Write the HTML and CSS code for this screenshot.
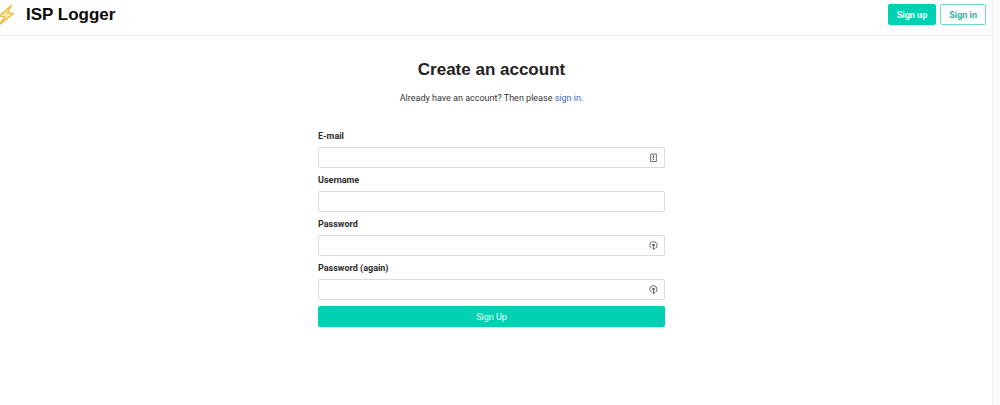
FILE: index.html
```html
<!DOCTYPE html>
<html lang="en">
<head>
  <meta charset="UTF-8">
  <meta name="viewport" content="width=device-width, initial-scale=1">
  <title>ISP Logger</title>
  <link rel="stylesheet" href="styles.css">
</head>
<body>
  <div class="page">
    <header class="navbar">
      <a class="brand" href="#">
        <svg class="bolt" viewBox="0 0 16 22" aria-hidden="true">
          <path d="M11.5 1.5L-1 12L5 12.8L-0.5 20.5L13.5 9.5L7.5 8.8Z" fill="#fde9a8" stroke="#ecb93f" stroke-width="1.3" stroke-linejoin="round"/>
        </svg>
        <span>ISP Logger</span>
      </a>
      <nav class="buttons">
        <a class="button primary" href="#">Sign up</a>
        <a class="button outlined" href="#">Sign in</a>
      </nav>
    </header>

    <main class="content">
      <h1>Create an account</h1>
      <p class="subtitle">Already have an account? Then please <a href="#">sign in</a>.</p>

      <form class="signup">
        <div class="field">
          <label for="email">E-mail</label>
          <div class="control">
            <input type="email" id="email" name="email">
            <svg class="icon" viewBox="0 0 8 8" aria-hidden="true">
              <rect x="1.4" y="0.9" width="5.2" height="6.6" rx="0.6" fill="#f4f4f4" stroke="#777" stroke-width="0.9"/>
              <path d="M4 2v2.6M4 5.4v0.8" stroke="#666"/>
            </svg>
          </div>
        </div>
        <div class="field">
          <label for="username">Username</label>
          <div class="control">
            <input type="text" id="username" name="username">
          </div>
        </div>
        <div class="field">
          <label for="password1">Password</label>
          <div class="control">
            <input type="password" id="password1" name="password1">
            <svg class="icon" viewBox="0 0 8 8" aria-hidden="true">
              <path d="M2.3 6.6A3.2 3.2 0 1 1 5.9 6.4" fill="none" stroke="#777" stroke-width="0.9"/>
              <circle cx="4" cy="3.6" r="1.1" fill="#555"/>
              <path d="M4 4v4M4 6.8h1.5" stroke="#666" stroke-width="0.9"/>
            </svg>
          </div>
        </div>
        <div class="field">
          <label for="password2">Password (again)</label>
          <div class="control">
            <input type="password" id="password2" name="password2">
            <svg class="icon" viewBox="0 0 8 8" aria-hidden="true">
              <path d="M2.3 6.6A3.2 3.2 0 1 1 5.9 6.4" fill="none" stroke="#777" stroke-width="0.9"/>
              <circle cx="4" cy="3.6" r="1.1" fill="#555"/>
              <path d="M4 4v4M4 6.8h1.5" stroke="#666" stroke-width="0.9"/>
            </svg>
          </div>
        </div>
        <button class="submit" type="submit">Sign Up</button>
      </form>
    </main>
  </div>
  <div class="gutter"></div>
</body>
</html>
```

FILE: styles.css
```css
* {
  box-sizing: border-box;
}

body {
  margin: 0;
  min-height: 100vh;
  display: flex;
  font-family: Roboto, "Liberation Sans", Arial, sans-serif;
  font-size: 9px;
  line-height: 12px;
  color: #363636;
  background: #fff;
}

a {
  color: #3a6ad0;
  text-decoration: none;
}

.page {
  flex: 1;
}

.gutter {
  width: 8px;
  background: #fafafa;
  border-left: 1px solid #eee;
}

.navbar {
  display: flex;
  align-items: center;
  justify-content: space-between;
  height: 36px;
  padding: 0 6px 6px 0;
  border-bottom: 1px solid #eee;
}

.brand,
h1 {
  font-family: "Liberation Sans", Arial, sans-serif;
  font-size: 17px;
  font-weight: bold;
  line-height: 20px;
}

.brand {
  display: flex;
  align-items: center;
  gap: 10px;
  color: #0a0a0a;
}

.bolt {
  width: 16px;
  height: 22px;
}

.buttons {
  display: flex;
  gap: 4px;
}

.button {
  display: flex;
  align-items: center;
  height: 21px;
  padding: 0 8px;
  border: 1px solid #00d1b2;
  border-radius: 2px;
  font-weight: bold;
}

.primary {
  background: #00d1b2;
  color: #fff;
}

.outlined {
  border-color: #6fd8c8;
  color: #2bb5a0;
}

.content {
  padding: 24px 9px 24px 0;
  text-align: center;
}

h1 {
  margin: 0 0 12px;
  color: #222;
}

.subtitle {
  margin: 0 0 26px;
}

.signup {
  width: 347px;
  max-width: 100%;
  margin: 0 auto;
  text-align: left;
}

.field {
  margin-bottom: 6px;
}

.field label {
  display: block;
  margin-bottom: 5px;
  color: #2b2b2b;
  font-weight: bold;
}

.control {
  position: relative;
}

.control input {
  display: block;
  width: 100%;
  height: 21px;
  padding: 0 20px 0 6px;
  border: 1px solid #dbdbdb;
  border-radius: 2px;
  background: #fff;
  font: inherit;
}

.icon {
  position: absolute;
  top: 6px;
  right: 7px;
  width: 9px;
  height: 9px;
}

.submit {
  display: block;
  width: 100%;
  height: 21px;
  padding: 0;
  border: none;
  border-radius: 2px;
  background: #00d1b2;
  color: #fff;
  font: inherit;
}
```
